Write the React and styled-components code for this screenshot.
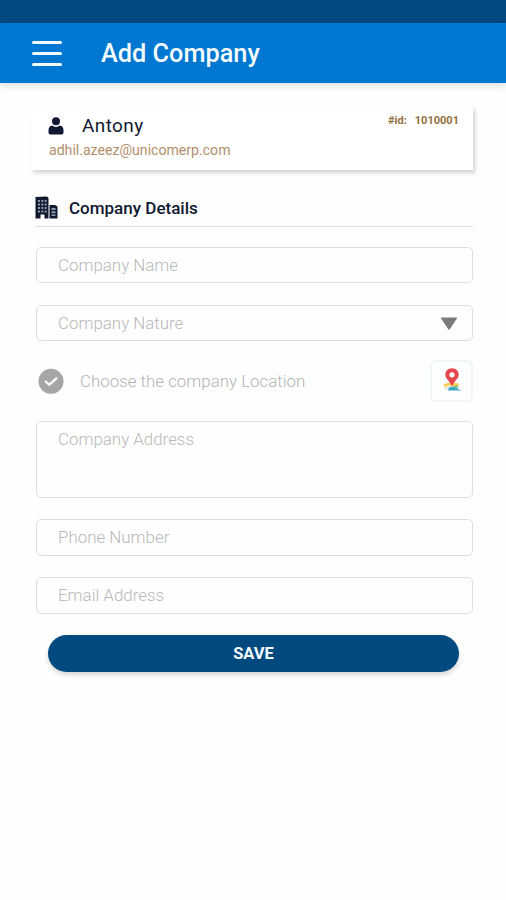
import React, { useState } from 'react';
import styled, { createGlobalStyle } from 'styled-components';

const App = () => {
  const [form, setForm] = useState({
    name: '',
    nature: '',
    address: '',
    phone: '',
    email: '',
  });

  const handleChange = (e) => {
    setForm({ ...form, [e.target.name]: e.target.value });
  };

  return (
    <>
      <GlobalStyle />
      <Screen>
        <StatusBar />
        <Header>
          <MenuButton aria-label="menu">
            <MenuLine />
            <MenuLine />
            <MenuLine />
          </MenuButton>
          <Title>Add Company</Title>
        </Header>
        <Content>
          <UserCard>
            <div>
              <UserRow>
                <UserIcon />
                <UserName>Antony</UserName>
              </UserRow>
              <UserEmail>adhil.azeez@unicomerp.com</UserEmail>
            </div>
            <UserId>
              <span>#id:</span>
              <span>1010001</span>
            </UserId>
          </UserCard>
          <SectionHeader>
            <CompanyIcon />
            <SectionTitle>Company Details</SectionTitle>
          </SectionHeader>
          <Form onSubmit={(e) => e.preventDefault()}>
            <Field>
              <Input name="name" placeholder="Company Name" value={form.name} onChange={handleChange} />
            </Field>
            <Field>
              <Input name="nature" placeholder="Company Nature" value={form.nature} onChange={handleChange} />
              <Arrow />
            </Field>
            <LocationRow>
              <CheckIcon />
              <LocationText>Choose the company Location</LocationText>
              <MapButton type="button" aria-label="map">
                <MapIcon />
              </MapButton>
            </LocationRow>
            <Field $height={77}>
              <TextArea name="address" placeholder="Company Address" value={form.address} onChange={handleChange} />
            </Field>
            <Field $height={37}>
              <Input name="phone" placeholder="Phone Number" value={form.phone} onChange={handleChange} />
            </Field>
            <Field $height={37}>
              <Input name="email" placeholder="Email Address" value={form.email} onChange={handleChange} />
            </Field>
            <SaveButton>SAVE</SaveButton>
          </Form>
        </Content>
      </Screen>
    </>
  );
};

export default App;

const UserIcon = () => (
  <svg width="16" height="18" viewBox="0 0 16 18" fill="#10192f">
    <circle cx="8" cy="4.2" r="4" />
    <path d="M4 8.6c2.4 1.7 5.6 1.7 8 0 2.3.5 3.500 2.300 3.500 4.700v2.200c0 1.200-.8 2-2 2h-11c-1.200 0-2-.8-2-2v-2.200c0-2.400 1.200-4.200 3.500-4.700z" />
  </svg>
);

const CompanyIcon = () => (
  <svg width="23" height="23" viewBox="0 0 23 23">
    <path d="M.5 1 12 .5l1.500 1.500v20.500H9.500v-4h-4v4h-5z" fill="#10192f" />
    <path d="M14.500 9H20l2.500 1.500v12h-8z" fill="#10192f" />
    <path
      d="M3 4h2v2H3zM6.300 4h2v2h-2zM9.600 4h2v2h-2zM3 7.500h2v2H3zM6.300 7.500h2v2h-2zM9.600 7.500h2v2h-2zM3 11h2v2H3zM6.300 11h2v2h-2zM9.600 11h2v2h-2zM3 14.500h2v2H3zM6.300 14.500h2v2h-2zM9.600 14.500h2v2h-2z"
      fill="#8c99ae"
    />
    <path d="M16.500 12h4v2h-4zM16.500 15.300h4v2h-4zM16.500 18.600h4v1.500h-4z" fill="#8c99ae" />
  </svg>
);

const CheckIcon = () => (
  <svg width="26" height="26" viewBox="0 0 26 26">
    <circle cx="13" cy="13.300" r="12.500" fill="#a6a6a6" />
    <path d="m7 13 4.300 3.800 7.700-7" fill="none" stroke="#fff" strokeWidth="2.300" />
  </svg>
);

const Arrow = () => (
  <svg width="18" height="13" viewBox="0 0 18 13">
    <path d="M1.500.5h15q1 0 .4.900l-7 10.600q-.9 1.100-1.800 0l-7-10.600Q.5.500 1.500.5z" fill="#7b7b7b" />
  </svg>
);

const MapIcon = () => (
  <svg width="20" height="24" viewBox="0 0 20 24">
    <path d="M1.500 16 8 14.500l9.500 1-2 3.500-13 .5z" fill="#f8cf55" />
    <path d="m1 20 7-3 3 2-6 3.500z" fill="#e5efe8" />
    <path d="m7 19.500 5-1 7 4H6z" fill="#38a3c7" />
    <path d="m10 19.500 4.500-2 3 2z" fill="#65b889" />
    <path d="M10 .3C6 .3 3.300 3.200 3.300 6.800 3.300 11 8 13 10 18.500c2-5.500 6.700-7.500 6.700-11.700C16.700 3.200 14 .3 10 .3z" fill="#e4484e" />
    <circle cx="10" cy="6.800" r="2.600" fill="#fff" />
  </svg>
);

const GlobalStyle = createGlobalStyle`
  * {
    box-sizing: border-box;
  }

  body {
    margin: 0;
    background-color: #fefefe;
    font-family: Roboto, 'Liberation Sans', sans-serif;
  }

  input, textarea, button {
    font-family: inherit;
  }
`;

const Screen = styled.div`
  min-height: 100vh;
  background-color: #fefefe;
`;

const StatusBar = styled.div`
  height: 23px;
  background-color: #004982;
`;

const Header = styled.header`
  display: flex;
  align-items: center;
  height: 60px;
  padding-left: 32px;
  background-color: #0077d0;
  box-shadow: 0 2px 8px rgba(0, 0, 0, 0.16);
`;

const MenuButton = styled.button`
  display: flex;
  flex-direction: column;
  gap: 8px;
  width: 30px;
  padding: 0;
  border: none;
  background: none;
`;

const MenuLine = styled.span`
  height: 3px;
  border-radius: 2px;
  background-color: #f4fbff;
`;

const Title = styled.h1`
  margin: 0 0 0 39px;
  padding-top: 2px;
  color: #f4fbff;
  font-size: 25.3px;
  font-weight: 500;
  line-height: 30px;
`;

const Content = styled.main`
  padding: 23px 33px 0 31px;
`;

const UserCard = styled.section`
  display: flex;
  justify-content: space-between;
  height: 64px;
  padding: 8px 14px 0 17px;
  background-color: white;
  box-shadow: 2px 3px 4px rgba(0, 0, 0, 0.17);
`;

const UserRow = styled.div`
  display: flex;
  align-items: center;
  gap: 18px;
  height: 24px;
`;

const UserName = styled.div`
  color: #10192f;
  font-size: 19px;
  letter-spacing: 0.4px;
  line-height: 22px;
`;

const UserEmail = styled.div`
  margin: 4px 0 0 1px;
  color: #b28e6b;
  font-size: 14.1px;
  line-height: 17px;
`;

const UserId = styled.div`
  display: flex;
  gap: 8px;
  color: #94703c;
  font-size: 11px;
  font-weight: 700;
  line-height: 13px;
`;

const SectionHeader = styled.div`
  display: flex;
  align-items: center;
  gap: 11px;
  height: 39px;
  margin: 18px 0 0 4px;
  border-bottom: 1px solid #dcdcdc;
`;

const SectionTitle = styled.h2`
  margin: 0;
  padding-top: 2px;
  color: #10192f;
  font-size: 17px;
  font-weight: 500;
`;

const Form = styled.form`
  display: flex;
  flex-direction: column;
  padding: 20px 0 0 5px;
`;

const Field = styled.div`
  display: flex;
  align-items: center;
  height: ${({ $height }) => $height || 36}px;
  margin-bottom: ${({ $height }) => ($height ? 21 : 22)}px;
  padding: 0 14px 0 21px;
  border: 1px solid #dedede;
  border-radius: 5px;
`;

const Input = styled.input`
  flex: 1;
  min-width: 0;
  padding: 0 0 1px;
  border: none;
  outline: none;
  background: none;
  font-size: 16.9px;
  font-weight: 300;

  &::placeholder {
    color: #b8b8b8;
  }
`;

const TextArea = styled(Input).attrs({ as: 'textarea' })`
  height: 61px;
  line-height: 20px;
  resize: none;
`;

const LocationRow = styled.div`
  display: flex;
  align-items: center;
  height: 42px;
  margin: -3px 0 19px;
  padding-left: 2px;
`;

const LocationText = styled.span`
  flex: 1;
  margin-left: 16px;
  color: #b4b4b4;
  font-size: 16.9px;
  font-weight: 300;
`;

const MapButton = styled.button`
  display: flex;
  align-items: center;
  justify-content: center;
  width: 43px;
  height: 42px;
  padding: 0 0 2px;
  border: 2px solid #f0f5f6;
  border-radius: 6px;
  background-color: #fdfefe;
`;

const SaveButton = styled.button`
  height: 37px;
  margin: 0 14px 0 12px;
  padding: 0;
  border: none;
  border-radius: 19px;
  background-color: #004a80;
  color: #f4fbff;
  font-size: 16.5px;
  font-weight: 700;
  box-shadow: 0 3px 5px rgba(0, 0, 0, 0.16);
`;
